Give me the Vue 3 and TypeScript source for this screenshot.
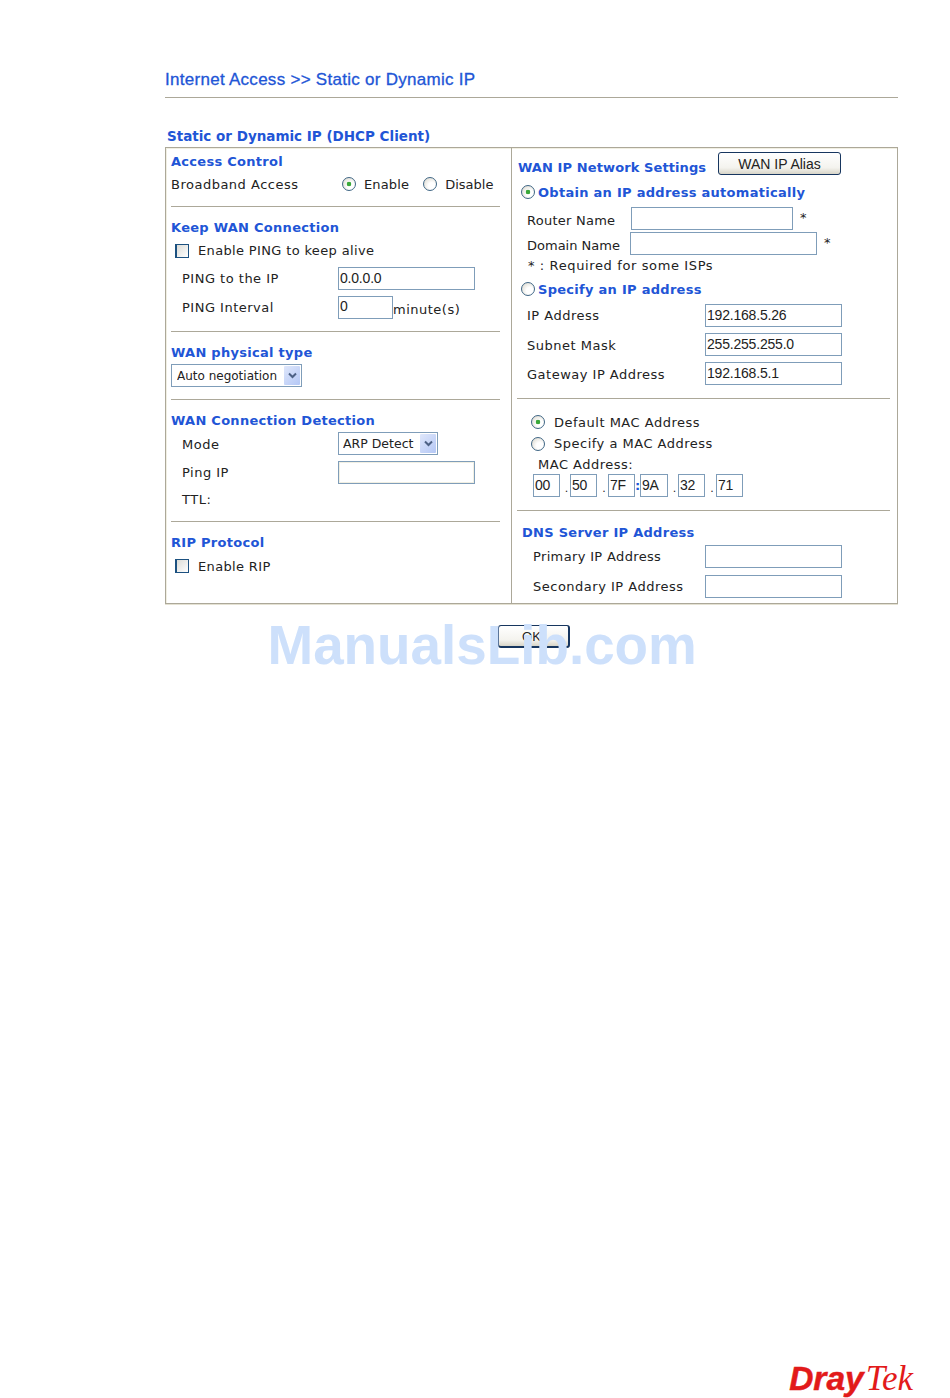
<script setup lang="ts">
const macParts = [
  { value: '00', sep: '.', sepWidth: 10, wide: false },
  { value: '50', sep: '.', sepWidth: 11, wide: false },
  { value: '7F', sep: ':', sepWidth: 5, wide: false },
  { value: '9A', sep: '.', sepWidth: 10, wide: true },
  { value: '32', sep: '.', sepWidth: 11, wide: false },
  { value: '71', sep: '', sepWidth: 0, wide: false },
];
</script>

<template>
  <div class="page">
    <h1 class="page-title">Internet Access &gt;&gt; Static or Dynamic IP</h1>
    <hr class="title-rule" />
    <h2 class="panel-title">Static or Dynamic IP (DHCP Client)</h2>

    <div class="panel">
      <!-- left column -->
      <div class="col col-left">
        <div class="row h24 head">Access Control</div>
        <div class="row h22">
          <span class="lbl w171">Broadband Access</span>
          <label class="opt opt-enable"><input type="radio" name="ba" checked /><span>Enable</span></label>
          <label class="opt opt-disable"><input type="radio" name="ba" /><span>Disable</span></label>
        </div>
        <hr class="rule left-rule r11" />

        <div class="row h20 head">Keep WAN Connection</div>
        <div class="row h27 indent-check">
          <input type="checkbox" class="check" /><span>Enable PING to keep alive</span>
        </div>
        <div class="row h29 indent">
          <span class="lbl w156">PING to the IP</span>
          <input class="field w137" value="0.0.0.0" />
        </div>
        <div class="row h28 indent">
          <span class="lbl w156">PING Interval</span>
          <input class="field w55" value="0" />
          <span class="unit">minute(s)</span>
        </div>
        <hr class="rule left-rule r10" />

        <div class="row h20 head">WAN physical type</div>
        <div class="row h27">
          <div class="select w131">
            <select><option>Auto negotiation</option></select>
            <span class="arrow"><svg width="9" height="7" viewBox="0 0 9 7"><path d="M1 1.5 4.5 5 8 1.5" fill="none" stroke="#4d6185" stroke-width="2" /></svg></span>
          </div>
        </div>
        <hr class="rule left-rule r10" />

        <div class="row h20 head">WAN Connection Detection</div>
        <div class="row h27 indent">
          <span class="lbl w156 low">Mode</span>
          <div class="select w100">
            <select><option>ARP Detect</option></select>
            <span class="arrow"><svg width="9" height="7" viewBox="0 0 9 7"><path d="M1 1.5 4.5 5 8 1.5" fill="none" stroke="#4d6185" stroke-width="2" /></svg></span>
          </div>
        </div>
        <div class="row h31 indent">
          <span class="lbl w156">Ping IP</span>
          <input class="field w137 disabled" />
        </div>
        <div class="row h22 indent"><span class="lbl">TTL:</span></div>
        <hr class="rule left-rule r11" />

        <div class="row h20 head">RIP Protocol</div>
        <div class="row h28 indent-check">
          <input type="checkbox" class="check" /><span>Enable RIP</span>
        </div>
      </div>

      <!-- right column -->
      <div class="col col-right">
        <div class="wan-top">
          <span class="head wan-head">WAN IP Network Settings</span>
          <button class="btn alias">WAN IP Alias</button>
        </div>
        <label class="row h24 head wide radio-head obtain">
          <input type="radio" name="mode" checked />Obtain an IP address automatically
        </label>
        <div class="row h25 in15">
          <span class="lbl router-lbl">Router Name</span>
          <input class="field w162" />
          <span class="star">*</span>
        </div>
        <div class="row h25 in15">
          <span class="lbl domain-lbl">Domain Name</span>
          <input class="field w187" />
          <span class="star">*</span>
        </div>
        <div class="row h19 note">* : Required for some ISPs</div>
        <label class="row h28 head wide radio-head">
          <input type="radio" name="mode" />Specify an IP address
        </label>
        <div class="row h25 in15">
          <span class="lbl w178">IP Address</span>
          <input class="field w137" value="192.168.5.26" />
        </div>
        <div class="row h33 in15">
          <span class="lbl w178 low">Subnet Mask</span>
          <input class="field w137" value="255.255.255.0" />
        </div>
        <div class="row h25 in15">
          <span class="lbl w178 low">Gateway IP Address</span>
          <input class="field w137" value="192.168.5.1" />
        </div>
        <hr class="rule right-rule r12" />

        <label class="row h22 mac-radio first"><input type="radio" name="mac" checked />Default MAC Address</label>
        <label class="row h21 mac-radio"><input type="radio" name="mac" />Specify a MAC Address</label>
        <div class="row h20 mac-label">MAC Address:</div>
        <div class="mac-row">
          <template v-for="p in macParts" :key="p.value">
            <input class="field mac" :class="{ 'mac-wide': p.wide }" :value="p.value" />
            <span class="mac-sep" :class="{ colon: p.sep === ':' }" :style="{ width: p.sepWidth + 'px' }">{{ p.sep }}</span>
          </template>
        </div>
        <hr class="rule right-rule r13" />

        <div class="row h20 head dns-head">DNS Server IP Address</div>
        <div class="row h29 in21">
          <span class="lbl w172 primary-lbl">Primary IP Address</span>
          <input class="field w137" />
        </div>
        <div class="row h31 in21">
          <span class="lbl w172">Secondary IP Address</span>
          <input class="field w137" />
        </div>
      </div>
    </div>

    <div class="actions">
      <button class="btn ok">OK</button>
    </div>

    <div class="watermark">ManualsLib.com</div>

    <div class="logo"><span class="dray">Dray</span><span class="tek">Tek</span></div>
  </div>
</template>

<style>
html,
body {
  margin: 0;
  background: #fff;
}
</style>

<style scoped>
.page {
  position: relative;
  box-sizing: border-box;
  width: 950px;
  height: 1398px;
  padding: 67px 52px 0 165px;
  overflow: hidden;
  display: flex;
  flex-direction: column;
  background: #fff;
  font-family: "DejaVu Sans", sans-serif;
  font-size: 13px;
  color: #222;
}

.page-title {
  margin: 0;
  height: 25px;
  font: 400 17px/26px "Liberation Sans", sans-serif;
  letter-spacing: 0.28px;
  color: #2155d6;
  -webkit-text-stroke: 0.3px #2155d6;
}

.title-rule {
  margin: 5px 0 0;
  border: 0;
  height: 1px;
  background: #aca899;
}

.panel-title {
  margin: 28px 0 1px 2px;
  height: 20px;
  font: 700 13.5px/20px "DejaVu Sans", sans-serif;
  color: #2155d6;
}

.panel {
  display: flex;
  border: 1px solid #aca899;
  box-shadow: inset 1px 1px 0 #f1efe2, 0 1px 0 #e4e1d2;
}

.col {
  box-sizing: border-box;
  padding-top: 1px;
  display: flex;
  flex-direction: column;
}

.col-left {
  width: 346px;
  padding-left: 5px;
  border-right: 1px solid #aca899;
}

.col-right {
  flex: 1;
  padding-bottom: 1px;
}

.row {
  display: flex;
  align-items: center;
  white-space: nowrap;
  letter-spacing: 0.5px;
}

.h19 { height: 19px; }
.h20 { height: 20px; }
.h21 { height: 21px; }
.h22 { height: 22px; }
.h24 { height: 24px; }
.h25 { height: 25px; }
.h27 { height: 27px; }
.h28 { height: 28px; }
.h29 { height: 29px; }
.h31 { height: 31px; }
.h33 { height: 33px; }

.head {
  font-weight: 700;
  font-size: 13px;
  letter-spacing: 0.28px;
  color: #2155d6;
}

.lbl {
  flex: none;
}

.low {
  padding-top: 2px;
}

.w156 { width: 156px; }
.w171 { width: 171px; }
.w172 { width: 172px; }
.w178 { width: 178px; }

.indent {
  padding-left: 11px;
}

.indent-check {
  padding-left: 4px;
  gap: 9px;
  letter-spacing: 0.35px;
}

.opt {
  display: flex;
  align-items: center;
  gap: 8px;
  letter-spacing: 0.15px;
}

.opt-disable {
  margin-left: 14px;
  letter-spacing: 0;
}

input[type="radio"] {
  appearance: none;
  flex: none;
  box-sizing: border-box;
  width: 14px;
  height: 14px;
  margin: 0;
  border: 1px solid #3f6685;
  border-radius: 50%;
  background: radial-gradient(circle at 65% 65%, #fff 30%, #dcd9cf 90%);
}

input[type="radio"]:checked {
  background:
    radial-gradient(circle, #3aa83a 0 2px, transparent 2.6px),
    radial-gradient(circle at 65% 65%, #fff 30%, #dcd9cf 90%);
}

.check {
  appearance: none;
  flex: none;
  box-sizing: border-box;
  width: 14px;
  height: 14px;
  margin: 0;
  border: 1px solid #1c5180;
  border-left-width: 2px;
  background: linear-gradient(135deg, #dcdcd7, #fff);
}

.field {
  flex: none;
  box-sizing: border-box;
  height: 23px;
  padding: 0 1px 2px;
  border: 1px solid #7f9db9;
  border-radius: 0;
  outline: 0;
  background: #fff;
  font: 14px "Liberation Sans", sans-serif;
  letter-spacing: -0.2px;
  color: #222;
}

.field.disabled {
  box-shadow: inset 1px 1px 0 #f1efe2, inset -1px -1px 0 #f1efe2;
}

.w55 { width: 55px; }
.w137 { width: 137px; }
.w162 { width: 162px; }
.w187 { width: 187px; }

.unit {
  padding-top: 4px;
}

.rule {
  flex: none;
  height: 1px;
  border: 0;
  background: #aca899;
}

.left-rule {
  width: 329px;
  margin-left: 0;
  margin-right: 0;
}

.r10 { margin-top: 10px; margin-bottom: 10px; }
.r11 { margin-top: 11px; margin-bottom: 10px; }
.r12 { margin-top: 12px; margin-bottom: 12px; }
.r13 { margin-top: 13px; margin-bottom: 11px; }

.right-rule {
  margin-left: 5px;
  margin-right: 7px;
}

.select {
  position: relative;
  flex: none;
  box-sizing: border-box;
  height: 23px;
  border: 1px solid #7f9db9;
  background: #fff;
}

.select select {
  appearance: none;
  display: block;
  width: 100%;
  height: 100%;
  padding: 0 0 0 5px;
  border: 0;
  outline: 0;
  background: transparent;
  font: 12px "DejaVu Sans", sans-serif;
  letter-spacing: 0;
  color: #222;
}

.w100 select {
  padding-left: 4px;
  font-size: 12.5px;
}

.arrow {
  position: absolute;
  top: 1px;
  right: 1px;
  width: 16px;
  height: 19px;
  display: flex;
  align-items: center;
  justify-content: center;
  border-radius: 1px;
  background: linear-gradient(135deg, #dfe7fb, #b4c7f5);
}

.w100 { width: 100px; }
.w131 { width: 131px; }

.wan-top {
  display: flex;
  align-items: flex-start;
  height: 31px;
  padding: 3px 0 0 6px;
  box-sizing: border-box;
}

.wan-head {
  padding-top: 8px;
  width: 200px;
  flex: none;
  white-space: nowrap;
  letter-spacing: 0.1px;
}

.btn {
  box-sizing: border-box;
  height: 23px;
  padding: 0;
  border: 1px solid #17365f;
  border-radius: 3px;
  background: linear-gradient(#fff 0, #f4f3ee 70%, #d8d5c8 100%);
  font: 14px "Liberation Sans", sans-serif;
  color: #222;
}

.alias {
  flex: none;
  width: 123px;
}

.radio-head {
  padding-left: 9px;
  gap: 3px;
}

.obtain {
  margin-bottom: 2px;
}

.in15 { padding-left: 15px; }
.in21 { padding-left: 21px; }

.router-lbl {
  width: 104px;
  padding-top: 3px;
  letter-spacing: 0.25px;
}

.domain-lbl {
  width: 103px;
  padding-top: 3px;
  letter-spacing: 0;
}

.primary-lbl {
  letter-spacing: 0.35px;
}

.star {
  margin-left: 7px;
  padding-bottom: 2px;
}

.note {
  padding-left: 16px;
  letter-spacing: 0.62px;
}

.mac-radio {
  padding-left: 19px;
  gap: 9px;
}

.mac-label {
  padding: 1px 0 0 26px;
  box-sizing: border-box;
}

.mac-row {
  display: flex;
  align-items: center;
  height: 23px;
  padding-left: 21px;
}

.mac {
  width: 27px;
}

.mac-wide {
  width: 28px;
}

.mac-sep {
  flex: none;
  padding: 6px 0 0 3px;
  box-sizing: border-box;
  text-align: center;
  font-size: 11px;
  line-height: 1;
}

.mac-sep.colon {
  padding: 0;
  font-weight: 700;
  font-size: 13px;
  color: #2155d6;
}

.dns-head {
  padding-left: 10px;
}

.actions {
  margin: 21px 0 0 333px;
}

.ok {
  display: block;
  width: 72px;
  padding-right: 4px;
  font-size: 13px;
  border-color: #17365f;
  border-width: 1px 2px 2px 1px;
}

.watermark {
  position: absolute;
  left: 267.5px;
  top: 618px;
  font: 700 54.8px/1 "Liberation Sans", sans-serif;
  color: #cde0fb;
  white-space: nowrap;
}

.logo {
  margin: auto -15px 0 auto;
  height: 38px;
  white-space: nowrap;
}

.dray {
  font: italic 700 33.5px/38px "Liberation Sans", sans-serif;
  color: #e21a1a;
  -webkit-text-stroke: 0.5px #e21a1a;
}

.tek {
  margin-left: 2px;
  font: italic 400 35px/38px "Liberation Serif", serif;
  color: #e21a1a;
}
</style>
